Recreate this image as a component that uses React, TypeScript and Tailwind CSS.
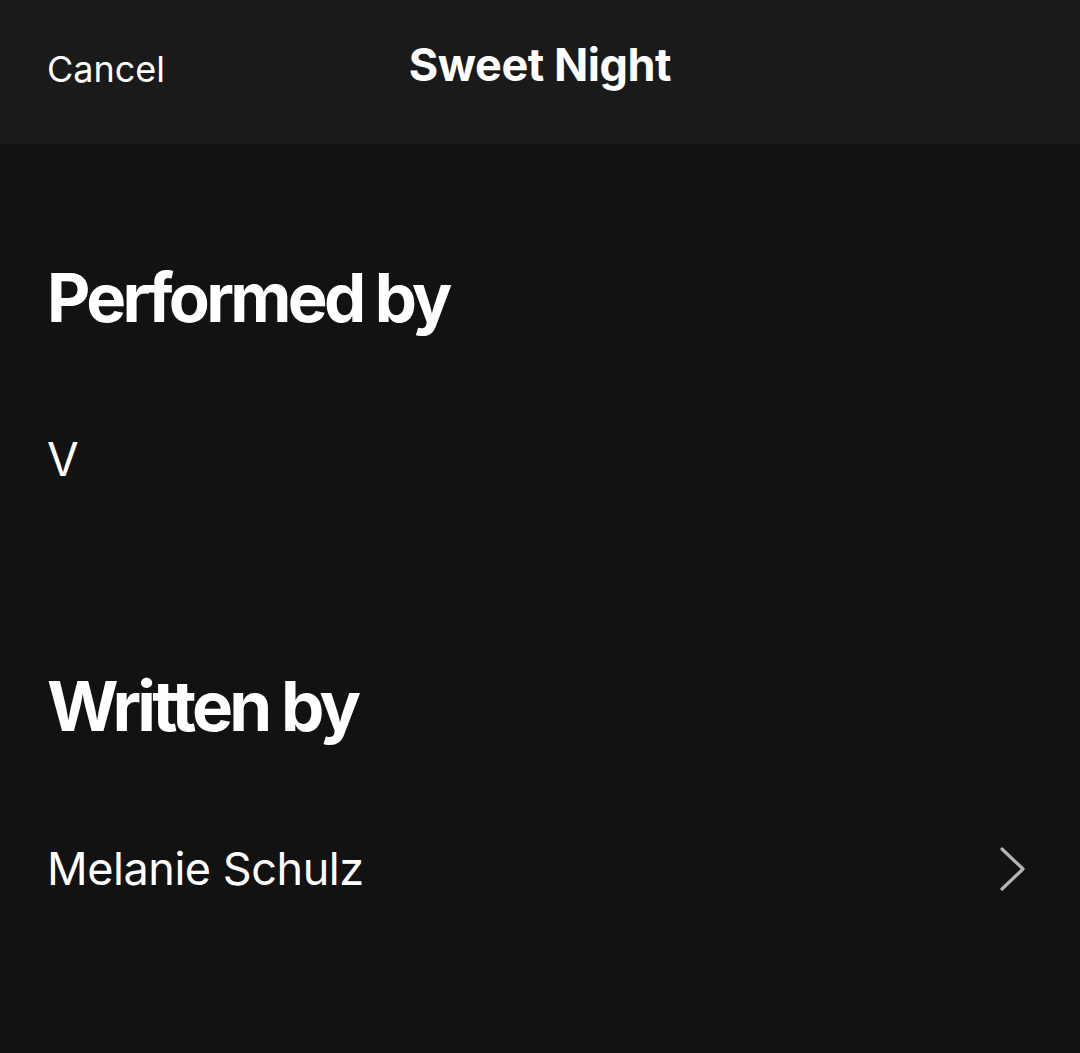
import React from "react";

function ChevronRight() {
  return (
    <svg width="28" height="44" viewBox="0 0 28 44" fill="none">
      <path d="M4 2 L25 22 L4 42" stroke="#b3b3b3" strokeWidth="3.2" strokeLinecap="round" strokeLinejoin="round" />
    </svg>
  );
}

export default function App() {
  return (
    <div
      className="w-[1080px] h-[1053px] bg-[#121212] text-white flex flex-col overflow-hidden"
      style={{ fontFamily: "Inter, 'Noto Sans', sans-serif" }}
    >
      <header className="h-[144px] bg-[#1a1a1a] grid grid-cols-[1fr_auto_1fr] items-center px-[47px] pb-[16px]">
        <span className="text-[36px] leading-none pt-[10px] justify-self-start">Cancel</span>
        <span className="text-[45px] font-bold leading-none tracking-[-0.01em]">Sweet Night</span>
        <span />
      </header>

      <main className="flex flex-col px-[47px]">
        <h2 className="mt-[120px] text-[67px] font-bold leading-none tracking-[-0.055em]">Performed by</h2>
        <div className="mt-[105px] text-[46px] leading-none">V</div>

        <h2 className="mt-[190px] text-[69px] font-bold leading-none tracking-[-0.055em]">Written by</h2>
        <div className="mt-[105px] flex items-center justify-between pr-[7px]">
          <span className="text-[45px] leading-none tracking-[-0.01em]">Melanie Schulz</span>
          <ChevronRight />
        </div>
      </main>
    </div>
  );
}
